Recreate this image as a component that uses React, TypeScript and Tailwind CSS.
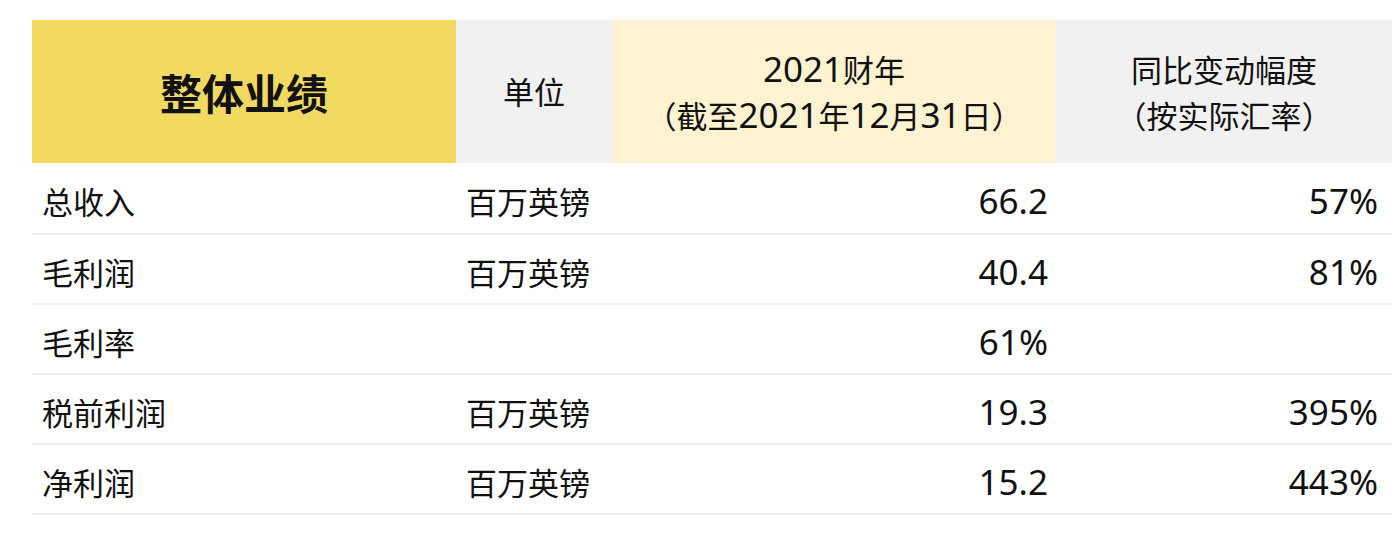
import React from 'react';

type Row = { name: string; unit: string; value: string; change: string };

const rows: Row[] = [
  { name: '总收入', unit: '百万英镑', value: '66.2', change: '57%' },
  { name: '毛利润', unit: '百万英镑', value: '40.4', change: '81%' },
  { name: '毛利率', unit: '', value: '61%', change: '' },
  { name: '税前利润', unit: '百万英镑', value: '19.3', change: '395%' },
  { name: '净利润', unit: '百万英镑', value: '15.2', change: '443%' },
];

// 数字用较大的拉丁字体，和中文宽度对齐
const N = ({ children }: { children: React.ReactNode }) => (
  <span className="text-[35px] font-['Noto_Sans',sans-serif]">{children}</span>
);

export default function App() {
  return (
    <div className="bg-white w-[1392px] h-[534px] pt-5 pl-8 text-[#111] font-['Noto_Sans_CJK_SC','Noto_Sans',sans-serif]">
      <div className="grid grid-cols-[424px_156px_444px_336px] w-[1360px]">
        {/* 表头 */}
        <div className="h-[143px] bg-[#f2d962] flex items-center justify-center text-[42px] font-bold">
          整体业绩
        </div>
        <div className="h-[143px] bg-[#f1f1f1] flex items-center justify-center text-[31px]">
          单位
        </div>
        <div className="h-[143px] bg-[#fdf3d1] flex flex-col items-center justify-center text-[31px] leading-[46px]">
          <span>
            <N>2021</N>财年
          </span>
          <span>
            （截至<N>2021</N>年<N>12</N>月<N>31</N>日）
          </span>
        </div>
        <div className="h-[143px] bg-[#f1f1f1] flex flex-col items-center justify-center text-[31px] leading-[46px]">
          <span>同比变动幅度</span>
          <span>（按实际汇率）</span>
        </div>

        {/* 数据行 */}
        {rows.map((r, i) => {
          const h = i === 0 ? 'h-[72px]' : 'h-[70px]';
          return (
            <React.Fragment key={r.name}>
              <div className={`${h} border-b-2 border-[#f0f0f0] flex items-center pl-[10px] pt-[5px] text-[31px] leading-none`}>
                {r.name}
              </div>
              <div className={`${h} border-b-2 border-[#f0f0f0] flex items-center pl-[10px] pt-[5px] text-[31px] leading-none`}>
                {r.unit}
              </div>
              <div className={`${h} border-b-2 border-[#f0f0f0] flex items-center justify-end pr-[8px] pt-[5px] leading-none`}>
                <N>{r.value}</N>
              </div>
              <div className={`${h} border-b-2 border-[#f0f0f0] flex items-center justify-end pr-[14px] pt-[5px] leading-none`}>
                <N>{r.change}</N>
              </div>
            </React.Fragment>
          );
        })}
      </div>
    </div>
  );
}
